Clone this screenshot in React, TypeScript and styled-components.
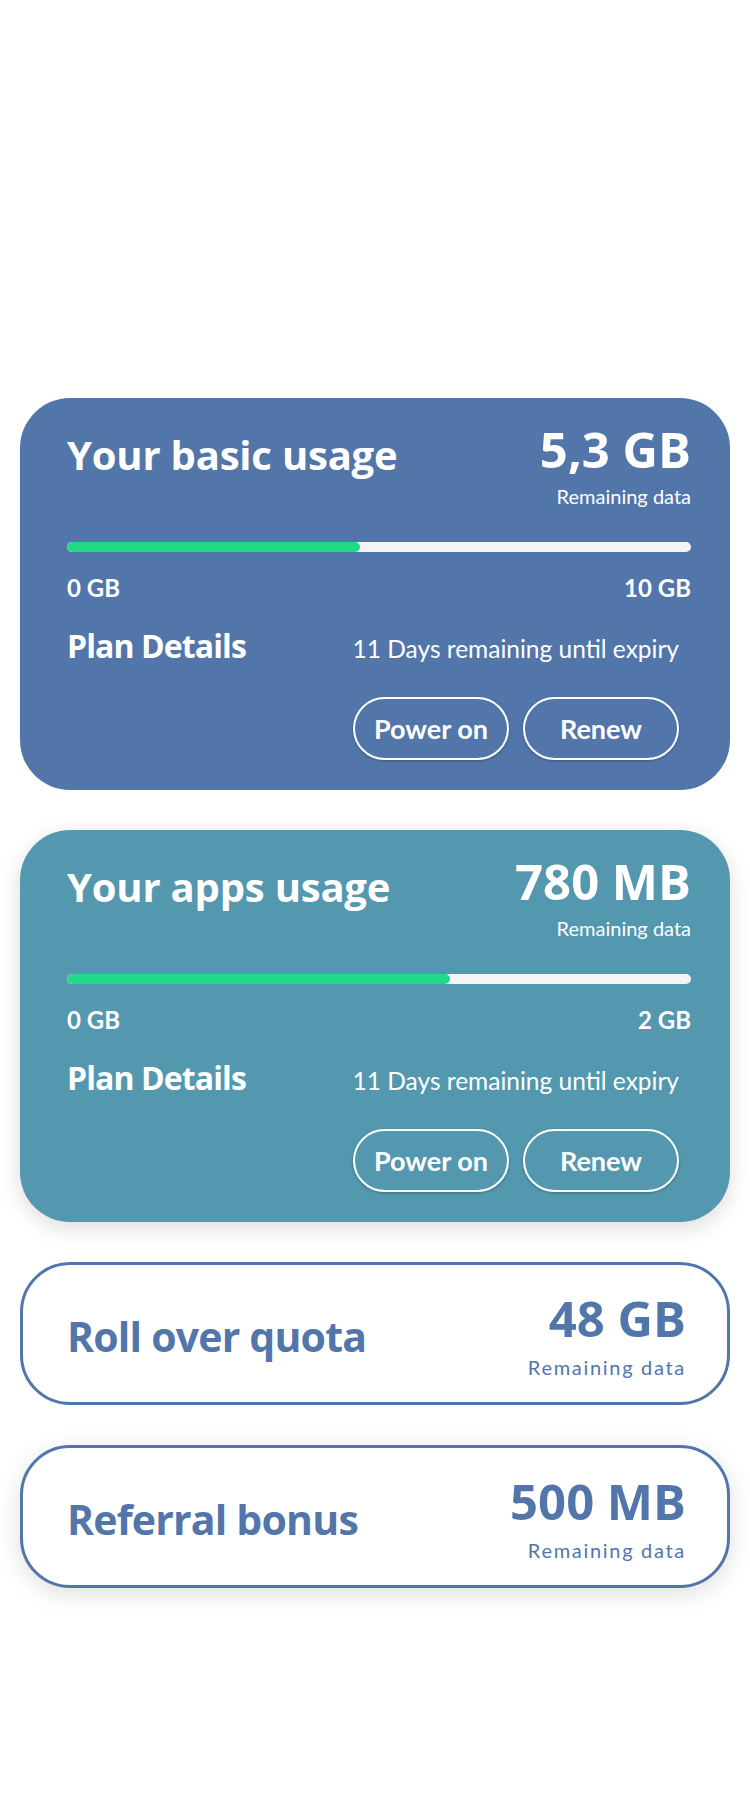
import React from "react";
import styled, { createGlobalStyle } from "styled-components";

const BLUE = "#5276aa";
const TEAL = "#5398af";
const GREEN = "#22d985";
const DISPLAY = `"Open Sans", "Noto Sans", sans-serif`;
const BODY = `Lato, "Liberation Sans", sans-serif`;

const GlobalStyle = createGlobalStyle`
  html, body {
    margin: 0;
    padding: 0;
    background: #ffffff;
  }
  body {
    font-family: ${BODY};
    -webkit-font-smoothing: antialiased;
  }
  * { box-sizing: border-box; }
`;

const Page = styled.main`
  min-height: 1814px;
  padding: 398px 20px 200px;
  display: flex;
  flex-direction: column;
  gap: 40px;
`;

const UsageCard = styled.section<{ $bg: string; $shadow?: boolean }>`
  background: ${(p) => p.$bg};
  border-radius: 50px;
  padding: 27px 39px 30px 47px;
  color: #ffffff;
  box-shadow: ${(p) => (p.$shadow ? "0 6px 22px rgba(0, 0, 0, 0.14)" : "none")};
`;

const Header = styled.div`
  display: flex;
  justify-content: space-between;
  align-items: flex-start;
`;

const Title = styled.h2`
  margin: 5px 0 0;
  font-family: ${DISPLAY};
  font-weight: 700;
  font-size: 40px;
  line-height: 50px;
  letter-spacing: -0.2px;
`;

const AmountBlock = styled.div`
  display: flex;
  flex-direction: column;
  align-items: flex-end;
  text-align: right;
`;

const Amount = styled.div`
  font-family: ${DISPLAY};
  font-weight: 700;
  font-size: 49px;
  line-height: 48px;
`;

const Caption = styled.div`
  margin-top: 12px;
  font-family: ${BODY};
  font-size: 20px;
  line-height: 22px;
`;

const Bar = styled.div`
  margin-top: 35px;
  height: 10px;
  border-radius: 5px;
  background: #f4f4f4;
  overflow: hidden;
`;

const BarFill = styled.div`
  height: 100%;
  border-radius: 5px;
  background: ${GREEN};
`;

const ScaleRow = styled.div`
  margin-top: 23px;
  display: flex;
  justify-content: space-between;
  font-family: ${BODY};
  font-weight: 700;
  font-size: 24px;
  line-height: 26px;
`;

const DetailsRow = styled.div`
  margin-top: 25px;
  height: 40px;
  display: flex;
  justify-content: space-between;
  align-items: baseline;
`;

const PlanTitle = styled.h3`
  margin: 0;
  font-family: ${DISPLAY};
  font-weight: 700;
  font-size: 32px;
  line-height: 40px;
  letter-spacing: -0.9px;
`;

const Expiry = styled.span`
  margin-right: 12px;
  font-family: ${BODY};
  font-size: 24.5px;
  line-height: 26px;
`;

const Actions = styled.div`
  margin-top: 31px;
  padding-right: 12px;
  display: flex;
  justify-content: flex-end;
  gap: 14px;
`;

const PillButton = styled.button`
  width: 156px;
  height: 63px;
  border-radius: 32px;
  border: 2px solid #ffffff;
  background: transparent;
  color: #ffffff;
  font-family: ${BODY};
  font-weight: 700;
  font-size: 27px;
  padding: 0;
  box-shadow: 0 1px 3px rgba(0, 0, 0, 0.28);
  cursor: pointer;
`;

const QuotaCard = styled.section<{ $shadow?: boolean }>`
  height: 143px;
  border: 3px solid ${BLUE};
  border-radius: 50px;
  background: #ffffff;
  padding: 4px 41px 0 44px;
  display: flex;
  justify-content: space-between;
  align-items: center;
  color: ${BLUE};
  box-shadow: ${(p) => (p.$shadow ? "0 6px 24px rgba(0, 0, 0, 0.13)" : "none")};
`;

const QuotaTitle = styled.h2`
  margin: 0;
  font-family: ${DISPLAY};
  font-weight: 700;
  font-size: 41px;
  line-height: 50px;
  letter-spacing: -0.8px;
`;

const QuotaCaption = styled.div`
  margin-top: 14px;
  font-family: ${BODY};
  font-size: 20px;
  line-height: 22px;
  letter-spacing: 1.7px;
`;

type Usage = {
  title: string;
  amount: string;
  max: string;
  used: number;
  bg: string;
  shadow?: boolean;
};

const usages: Usage[] = [
  { title: "Your basic usage", amount: "5,3 GB", max: "10 GB", used: 47, bg: BLUE },
  { title: "Your apps usage", amount: "780 MB", max: "2 GB", used: 61.4, bg: TEAL, shadow: true },
];

const quotas = [
  { title: "Roll over quota", amount: "48 GB", shadow: false },
  { title: "Referral bonus", amount: "500 MB", shadow: true },
];

export default function App() {
  return (
    <>
      <GlobalStyle />
      <Page>
        {usages.map((u) => (
          <UsageCard key={u.title} $bg={u.bg} $shadow={u.shadow}>
            <Header>
              <Title>{u.title}</Title>
              <AmountBlock>
                <Amount>{u.amount}</Amount>
                <Caption>Remaining data</Caption>
              </AmountBlock>
            </Header>
            <Bar>
              <BarFill style={{ width: `${u.used}%` }} />
            </Bar>
            <ScaleRow>
              <span>0 GB</span>
              <span>{u.max}</span>
            </ScaleRow>
            <DetailsRow>
              <PlanTitle>Plan Details</PlanTitle>
              <Expiry>11 Days remaining until expiry</Expiry>
            </DetailsRow>
            <Actions>
              <PillButton type="button">Power on</PillButton>
              <PillButton type="button">Renew</PillButton>
            </Actions>
          </UsageCard>
        ))}
        {quotas.map((q) => (
          <QuotaCard key={q.title} $shadow={q.shadow}>
            <QuotaTitle>{q.title}</QuotaTitle>
            <AmountBlock>
              <Amount>{q.amount}</Amount>
              <QuotaCaption>Remaining data</QuotaCaption>
            </AmountBlock>
          </QuotaCard>
        ))}
      </Page>
    </>
  );
}
